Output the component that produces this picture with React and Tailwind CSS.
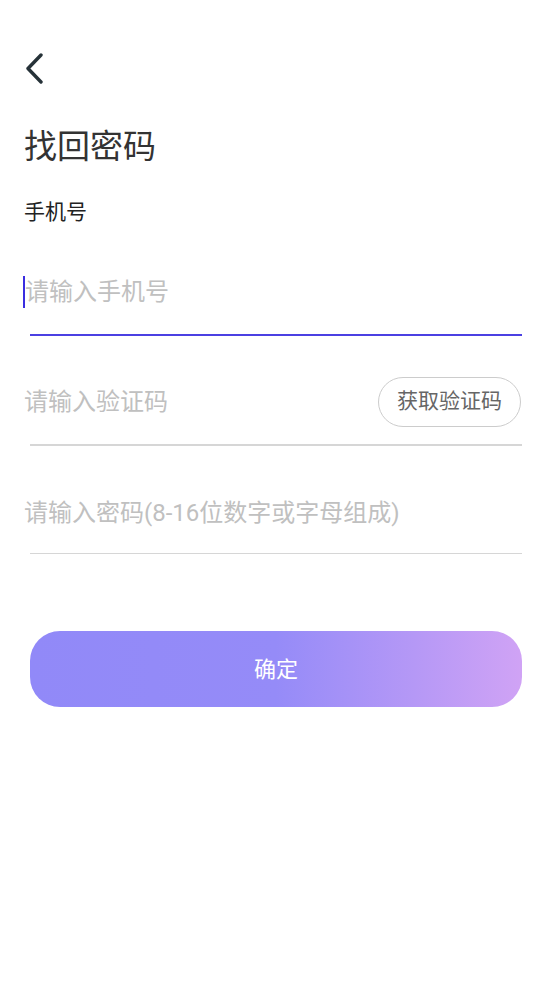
import React from 'react';

const font = { fontFamily: 'Roboto, "Noto Sans CJK SC", "Noto Sans", sans-serif' };

const App = () => {
  return (
    <div className="min-h-[981px] w-full bg-white" style={font}>
      {/* back */}
      <div className="pt-[53px] pl-[24px] h-[84px]">
        <svg width="20" height="31" viewBox="0 0 20 31" fill="none">
          <path d="M17 2 L4 15.5 L17 29" stroke="#263238" strokeWidth="3.4" strokeLinecap="round" strokeLinejoin="round" />
        </svg>
      </div>

      <h1 className="mt-[41px] pl-[24px] text-[33px] leading-[44px] text-[#333333]">找回密码</h1>

      <div className="mt-[29px] pl-[24px] text-[21px] leading-[28px] text-[#222222]">手机号</div>

      {/* phone */}
      <div className="mt-[46px] flex h-[40px] items-center pl-[23px] pr-[31px]">
        <span className="h-[32px] w-[2px] bg-[#3b2de0]" />
        <span className="text-[24px] leading-[32px] text-[#c0c0c0]">请输入手机号</span>
      </div>
      <div className="mx-[30px] mt-[22px] h-[2px] bg-[#4b40e2]" />

      {/* code */}
      <div className="mt-[40px] flex h-[52px] items-center justify-between pl-[24px] pr-[31px]">
        <span className="text-[24px] leading-[32px] text-[#c0c0c0]">请输入验证码</span>
        <button className="flex h-[50px] w-[143px] items-center justify-center rounded-full border-[1.5px] border-[#cccccc] text-[21px] text-[#666666]">
          获取验证码
        </button>
      </div>
      <div className="mx-[30px] mt-[16px] h-[1.5px] bg-[#d6d6d6]" />

      {/* password */}
      <div className="mt-[47px] flex h-[40px] items-center pl-[24px] pr-[31px]">
        <span className="text-[24px] leading-[32px] text-[#c0c0c0]">请输入密码(8-16位数字或字母组成)</span>
      </div>
      <div className="mx-[30px] mt-[20px] h-[1.5px] bg-[#d6d6d6]" />

      <div className="mx-[30px] mt-[77px]">
        <button className="flex h-[76px] w-full items-center justify-center rounded-[30px] bg-[linear-gradient(90deg,#9189f8_0%,#958bf8_50%,#b598f6_78%,#d0a3f5_100%)] text-[22px] text-white">
          确定
        </button>
      </div>
    </div>
  );
};

export default App;
